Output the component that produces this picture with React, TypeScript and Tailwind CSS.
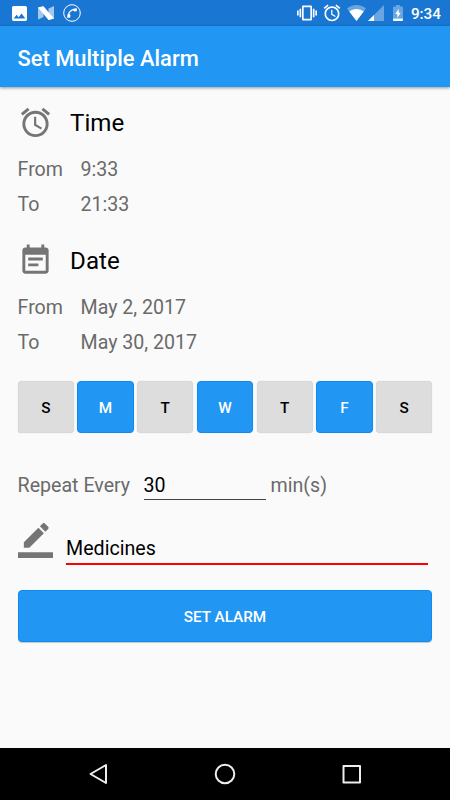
import { type ReactNode } from "react"
import clsx from "clsx"

const DAYS = [
  { label: "S", on: false },
  { label: "M", on: true },
  { label: "T", on: false },
  { label: "W", on: true },
  { label: "T", on: false },
  { label: "F", on: true },
  { label: "S", on: false },
]

export default function App() {
  return (
    <div className="flex h-[800px] w-[450px] flex-col overflow-hidden bg-[#fafafa] font-['Roboto',sans-serif] text-[19.6px] text-[#6a6a6a]">
      <StatusBar />
      <header className="z-10 flex h-[61px] shrink-0 items-center bg-[#2196f3] px-[17.5px] pt-[5px] text-[21.9px] font-medium text-white shadow-[0_1px_3px_rgba(0,0,0,0.4)]">
        Set Multiple Alarm
      </header>
      <main className="flex-1 px-[17.6px] pt-[18px]">
        <Section title="Time" icon={<AlarmIcon />}>
          <Field label="From" value="9:33" />
          <Field label="To" value="21:33" />
        </Section>
        <div className="h-[20px]" />
        <Section title="Date" icon={<EventIcon />}>
          <Field label="From" value="May 2, 2017" />
          <Field label="To" value="May 30, 2017" />
        </Section>
        <DayPicker />
        <Repeat />
        <Label />
        <button className="mt-[25px] block h-[52px] w-full rounded-[4px] border border-[#0d8bf2] bg-[#2196f3] pt-[2px] text-[15.3px] font-medium text-white shadow-[0_1px_1px_rgba(0,0,0,0.2)]">
          SET ALARM
        </button>
      </main>
      <NavBar />
    </div>
  )
}

function StatusBar() {
  return (
    <div className="flex h-[26px] shrink-0 items-center bg-[#1976d2] pr-[9px] pl-[12px] text-white">
      <svg className="h-[15px] w-[15px]" viewBox="3 3 18 18" fill="currentColor">
        <path d="M21 19V5c0-1.1-.9-2-2-2H5c-1.1 0-2 .9-2 2v14c0 1.1.9 2 2 2h14c1.1 0 2-.9 2-2zM8.5 13.5l2.5 3.01L14.5 12l4.5 6H5l3.5-4.5z" />
      </svg>
      <svg className="ml-[11px] h-[14px] w-[16px]" viewBox="0 0 16 14" fill="currentColor">
        <path d="M0 1.5V13.6l5.5-2.6V0.2zM10.5 2.5V14L16 12.5V0z" opacity=".6" />
        <path d="M0 1.5L5.5 0.2L16 12.5l-5.5 1.5z" />
      </svg>
      <svg className="ml-[9px] h-[18px] w-[18px]" viewBox="0 0 18 18" fill="currentColor">
        <circle cx="9" cy="9" r="8.3" fill="none" stroke="currentColor" />
        <path
          transform="translate(9 9) rotate(90) scale(.54) translate(-12 -12)"
          d="M20.01 15.38c-1.23 0-2.42-.2-3.53-.56-.35-.12-.74-.03-1.01.24l-1.57 1.97c-2.83-1.35-5.48-3.9-6.89-6.83l1.95-1.66c.27-.28.35-.67.24-1.02-.37-1.11-.56-2.3-.56-3.53 0-.54-.45-.99-.99-.99H4.19C3.65 3 3 3.24 3 3.99 3 13.28 10.73 21 20.01 21c.71 0 .99-.63.99-1.18v-3.45c0-.54-.45-.99-.99-.99z"
        />
      </svg>
      <svg className="ml-auto h-[20px] w-[20px]" viewBox="0 0 24 24" fill="currentColor">
        <path d="M0 15h2V9H0v6zm3 2h2V7H3v10zm19-8v6h2V9h-2zm-3 8h2V7h-2v10zM16.5 3h-9C6.67 3 6 3.67 6 4.5v15c0 .83.67 1.5 1.5 1.5h9c.83 0 1.5-.67 1.5-1.5v-15c0-.83-.67-1.5-1.5-1.5zM16 19H8V5h8v14z" />
      </svg>
      <svg className="ml-[5px] h-[20px] w-[20px]" viewBox="0 0 24 24" fill="currentColor">
        <path d={ALARM_PATH} />
      </svg>
      <svg className="ml-[5px] h-[16px] w-[19px]" viewBox="0 0 19 16" fill="currentColor">
        <path d="M9.5 16L0 3.6C2.5 1.4 5.8 0 9.5 0S16.5 1.4 19 3.6z" opacity=".35" />
        <path d="M9.5 16L2.3 6.4C4.3 4.9 6.8 4 9.5 4s5.2.9 7.2 2.4z" />
      </svg>
      <svg className="ml-[2px] h-[16px] w-[16px]" viewBox="0 0 16 16" fill="currentColor">
        <path d="M0 16L16 0v16z" opacity=".35" />
        <path d="M0 16l6-6v6z" />
      </svg>
      <svg className="ml-[9px] h-[16px] w-[10px]" viewBox="0 0 10 16" fill="currentColor">
        <path d="M0 13.5V2.5Q0 1.6 1 1.6h2V0h4v1.6h2q1 0 1 .9v11z" opacity=".35" />
        <path d="M0 13.5h10v1.5q0 1-1 1H1q-1 0-1-1z" />
        <path d="M5.7 3.7L2.3 9h2v4L7.7 7.7h-2z" />
      </svg>
      <span className="ml-[8px] pt-[2px] text-[15.3px] leading-[26px] font-medium">9:34</span>
    </div>
  )
}

function Section({ title, icon, children }: { title: string; icon: ReactNode; children: ReactNode }) {
  return (
    <section>
      <h2 className="mb-[12px] flex h-[35px] items-center gap-[17.5px] text-[24.1px] text-black">
        <span className="text-[#757575]">{icon}</span>
        <span className="pt-px">{title}</span>
      </h2>
      {children}
    </section>
  )
}

function Field({ label, value }: { label: string; value: string }) {
  return (
    <div className="flex h-[35.3px] items-center">
      <span className="w-[63px]">{label}</span>
      <span>{value}</span>
    </div>
  )
}

function DayPicker() {
  return (
    <div className="mt-[20.4px] grid h-[52.6px] grid-cols-7 gap-[3.3px]">
      {DAYS.map((d, i) => (
        <button
          key={i}
          className={clsx(
            "rounded-[4px] border pt-[3px] text-[15.3px] font-medium shadow-[0_0_1px_rgba(0,0,0,0.2)]",
            i === 0 && "rounded-bl-[2px]",
            i === DAYS.length - 1 && "rounded-br-[1px]",
            d.on ? "border-[#0d8bf2] bg-[#2196f3] text-white" : "border-[#d9d9d9] bg-[#dddddd] text-black",
          )}
        >
          {d.label}
        </button>
      ))}
    </div>
  )
}

function Repeat() {
  return (
    <div className="mt-[33px] flex h-[34px] items-start">
      <span className="w-[126px] leading-[39px]">Repeat Every</span>
      <span className="h-[34px] w-[122.5px] border-b border-[#444] leading-[39px] text-black">30</span>
      <span className="ml-[4.5px] leading-[39px]">min(s)</span>
    </div>
  )
}

function Label() {
  return (
    <div className="mt-[23px] flex h-[42px] items-start gap-[13.5px]">
      <PencilIcon />
      <span className="mr-[4.5px] h-[42px] flex-1 border-b-2 border-[#ff0000] leading-[52px] text-black">
        Medicines
      </span>
    </div>
  )
}

function NavBar() {
  return (
    <nav className="flex h-[52px] shrink-0 items-center justify-center gap-[104px] bg-black">
      <svg className="h-[22px] w-[22px]" viewBox="0 0 22 22" fill="none" stroke="#eee" strokeWidth="2" strokeLinejoin="round">
        <path d="M18 2v18L2.5 11z" />
      </svg>
      <svg className="h-[22px] w-[22px]" viewBox="0 0 22 22" fill="none" stroke="#eee" strokeWidth="2">
        <circle cx="11" cy="11" r="9.3" />
      </svg>
      <svg className="h-[22px] w-[22px]" viewBox="0 0 22 22" fill="none" stroke="#eee" strokeWidth="2" strokeLinejoin="round">
        <path d="M3.5 3H20v16.5H3.5z" />
      </svg>
    </nav>
  )
}

const ALARM_PATH =
  "M22 5.72l-4.6-3.86-1.29 1.53 4.6 3.86L22 5.72zM7.88 3.39L6.6 1.86 2 5.71l1.29 1.53 4.59-3.85zM12.5 8H11v6l4.75 2.85.75-1.23-4-2.37V8zM12 4c-4.97 0-9 4.03-9 9s4.02 9 9 9c4.97 0 9-4.03 9-9s-4.03-9-9-9zm0 16c-3.87 0-7-3.13-7-7s3.13-7 7-7 7 3.13 7 7-3.13 7-7 7z"

function AlarmIcon() {
  return (
    <svg className="h-[35px] w-[35px]" viewBox="0 0 24 24" fill="currentColor">
      <path d={ALARM_PATH} />
    </svg>
  )
}

function EventIcon() {
  return (
    <svg className="h-[35px] w-[35px]" viewBox="0 0 24 24" fill="currentColor">
      <path d="M17 10H7v2h10v-2zm2-7h-1V1h-2v2H8V1H6v2H5c-1.11 0-1.99.9-1.99 2L3 19c0 1.1.89 2 2 2h14c1.1 0 2-.9 2-2V5c0-1.1-.9-2-2-2zm0 16H5V8h14v11zm-5-5H7v2h7v-2z" />
    </svg>
  )
}

function PencilIcon() {
  return (
    <svg className="h-[35px] w-[35px] text-[#757575]" viewBox="0 0 24 24" fill="currentColor">
      <path d="M17.75 7L14 3.25l-10 10V17h3.75l10-10zm2.96-2.96c.39-.39.39-1.02 0-1.41L18.37.29c-.39-.39-1.02-.39-1.41 0L15 2.25 18.75 6l1.96-1.96z" />
      <path d="M0 20h24v4H0z" />
    </svg>
  )
}
